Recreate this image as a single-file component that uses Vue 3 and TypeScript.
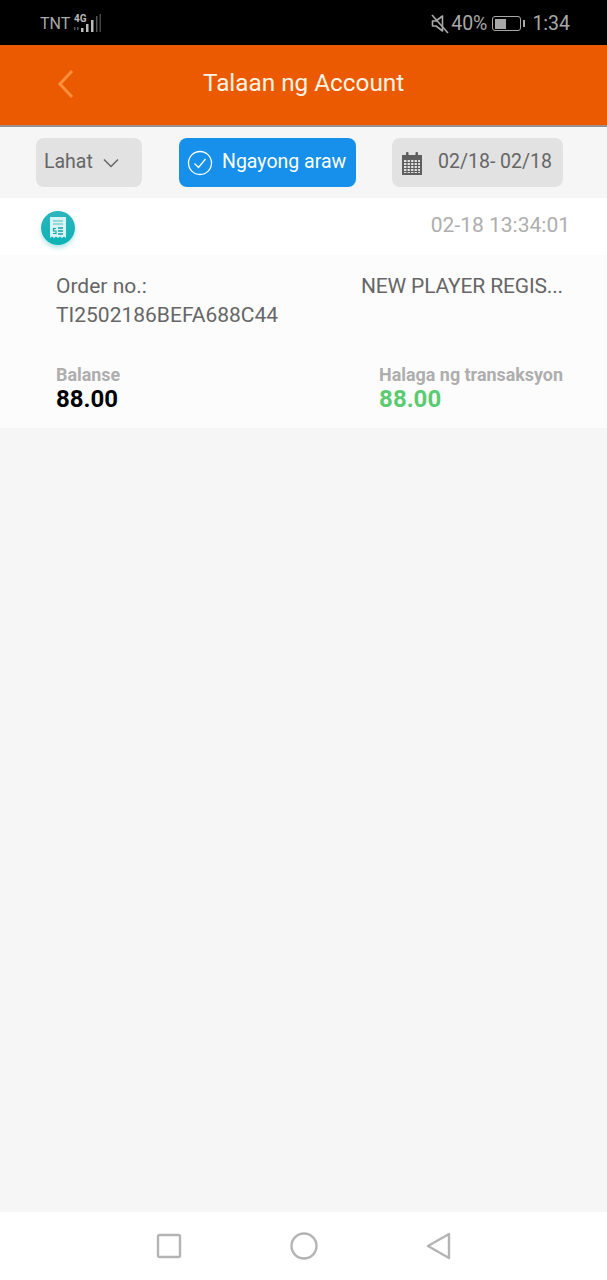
<script setup lang="ts">
const order = {
  label: 'Order no.:',
  no: 'TI2502186BEFA688C44',
  type: 'NEW PLAYER REGIS...',
  time: '02-18 13:34:01',
  balance: '88.00',
  amount: '88.00',
}
</script>

<template>
  <div class="page">
    <div class="status">
      <div class="status-left">
        <span>TNT</span>
        <svg class="signal" width="29" height="22" viewBox="0 0 29 22">
          <text x="1" y="9" class="net">4G</text>
          <rect x="1" y="14" width="1.5" height="3" fill="#555" />
          <rect x="4" y="14" width="1.5" height="3" fill="#555" />
          <rect x="8" y="15" width="2.500" height="4" fill="#bbb" />
          <rect x="13" y="11" width="2.500" height="8" fill="#bbb" />
          <rect x="18" y="7" width="2.500" height="12" fill="#bbb" />
          <rect x="23" y="3" width="1.5" height="16" fill="#555" />
          <rect x="26.500" y="1" width="1.5" height="18" fill="#444" />
        </svg>
      </div>
      <div class="status-right">
        <svg width="18" height="20" viewBox="0 0 18 20" fill="none" stroke="#aaa" stroke-width="1.600">
          <path d="M1.500 7h3.500L11.500 2v15l-6.500-5H1.500z" stroke-linejoin="round" />
          <path d="M1 1l16 18" />
        </svg>
        <span class="pct">40%</span>
        <div class="battery"><div class="battery-fill"></div></div>
        <div class="battery-tip"></div>
        <span class="clock">1:34</span>
      </div>
    </div>

    <header class="header">
      <svg class="back" width="18" height="30" viewBox="0 0 18 30" fill="none" stroke="#ff8f3c" stroke-width="3">
        <path d="M15 2L3 15l12 13" />
      </svg>
      <h1 class="title">Talaan ng Account</h1>
    </header>

    <div class="filters">
      <div class="chip chip-all">
        <span class="chip-text">Lahat</span>
        <svg width="18" height="10" viewBox="0 0 18 10" fill="none" stroke="#666" stroke-width="1.500">
          <path d="M2 1.500l7 7 7-7" />
        </svg>
      </div>
      <div class="chip chip-today">
        <svg width="26" height="26" viewBox="0 0 26 26" fill="none" stroke="#fff" stroke-width="1.300">
          <circle cx="13" cy="13" r="11.500" />
          <path d="M7.500 13.500l4 4 7-8.500" />
        </svg>
        <span class="chip-text">Ngayong araw</span>
      </div>
      <div class="chip chip-date">
        <svg width="22" height="26" viewBox="0 0 22 26">
          <path d="M1 5h20v20H1z" fill="#5f5f5f" />
          <rect x="5" y="2" width="2.500" height="6" rx="1" fill="#5f5f5f" />
          <rect x="14.500" y="2" width="2.500" height="6" rx="1" fill="#5f5f5f" />
          <rect x="3" y="10" width="16" height="13" fill="#e2e2e2" />
          <path d="M3 12.500h16M3 15.500h16M3 18.500h16M3 21.500h16" stroke="#5f5f5f" stroke-width="1.200" />
          <path d="M6 10v13M9.500 10v13M13 10v13M16.500 10v13" stroke="#5f5f5f" stroke-width="1.200" />
        </svg>
        <span class="chip-text">02/18- 02/18</span>
      </div>
    </div>

    <section class="card">
      <div class="card-top">
        <div class="receipt">
          <svg width="18" height="24" viewBox="0 0 18 24">
            <path d="M1 1h16v21l-2-1.500-2 1.500-2-1.500-2 1.500-2-1.500-2 1.500-2-1.500-2 1.500z" fill="#d8f3f3" />
            <path d="M4 5h10M4 8h10" stroke="#7fcfd2" stroke-width="1.500" />
            <path d="M9 12h5M9 15h5M9 18h5" stroke="#14a3ab" stroke-width="1.300" />
            <path d="M7 12.500H4.500v2.500H7v2.500H4" fill="none" stroke="#14a3ab" stroke-width="1.200" />
          </svg>
        </div>
        <span class="time">{{ order.time }}</span>
      </div>
      <div class="card-body">
        <div class="order-row">
          <div class="order-no">
            <div>{{ order.label }}</div>
            <div>{{ order.no }}</div>
          </div>
          <div class="order-type">{{ order.type }}</div>
        </div>
        <div class="money-row">
          <div>
            <div class="money-label">Balanse</div>
            <div class="money-value">{{ order.balance }}</div>
          </div>
          <div>
            <div class="money-label">Halaga ng transaksyon</div>
            <div class="money-value green">{{ order.amount }}</div>
          </div>
        </div>
      </div>
    </section>

    <div class="spacer"></div>

    <nav class="navbar">
      <svg width="26" height="26" viewBox="0 0 26 26" fill="none" stroke="#b4b4b4" stroke-width="2.400">
        <rect x="2" y="2" width="22" height="22" rx="1.500" />
      </svg>
      <svg width="28" height="28" viewBox="0 0 28 28" fill="none" stroke="#b4b4b4" stroke-width="2.400">
        <circle cx="14" cy="14" r="12.500" />
      </svg>
      <svg width="26" height="28" viewBox="0 0 26 28" fill="none" stroke="#b4b4b4" stroke-width="2.400" stroke-linejoin="round">
        <path d="M23 2v24L2 14z" />
      </svg>
    </nav>
  </div>
</template>

<style scoped>
.page {
  width: 607px;
  height: 1280px;
  display: flex;
  flex-direction: column;
  background: #f6f6f6;
  font-family: Roboto, "Liberation Sans", sans-serif;
  overflow: hidden;
}

.status {
  height: 45px;
  flex: none;
  background: #000;
  color: #a8a8a8;
  display: flex;
  justify-content: space-between;
  align-items: center;
  padding: 2px 37px 0 40px;
  box-sizing: border-box;
}

.status-left {
  display: flex;
  align-items: center;
  gap: 3px;
  font-size: 16px;
}

.net {
  font-size: 10px;
  font-weight: 700;
  fill: #bbb;
}

.status-right {
  display: flex;
  align-items: center;
  font-size: 19.500px;
}

.pct {
  margin-left: 2px;
}

.battery {
  width: 29px;
  height: 15px;
  margin-left: 5px;
  border: 1.500px solid #a8a8a8;
  border-radius: 3px;
  box-sizing: border-box;
  padding: 1.500px;
}

.battery-fill {
  width: 11px;
  height: 100%;
  background: #a8a8a8;
}

.battery-tip {
  width: 2px;
  height: 7px;
  margin-left: 2px;
  background: #a8a8a8;
}

.clock {
  margin-left: 7px;
}

.header {
  height: 82px;
  flex: none;
  background: #eb5a00;
  border-bottom: 2px solid #9a8f90;
  box-sizing: border-box;
  display: flex;
  align-items: center;
  padding: 0 0 2px 57px;
}

.back {
  flex: none;
}

.title {
  margin: 0 0 4px 128px;
  color: #fff3e6;
  font-size: 24.300px;
  font-weight: 400;
}

.filters {
  height: 71px;
  flex: none;
  box-sizing: border-box;
  display: flex;
  align-items: center;
  padding-left: 36px;
}

.chip {
  height: 49px;
  border-radius: 8px;
  box-sizing: border-box;
  display: flex;
  align-items: center;
  font-size: 19.500px;
  background: #e2e2e2;
  color: #666;
}

.chip-text {
  margin-bottom: 2px;
}

.chip-all {
  width: 106px;
  padding-left: 8px;
  gap: 9px;
}

.chip-today {
  width: 177px;
  margin-left: 37px;
  padding-left: 8px;
  gap: 9px;
  background: #1690ea;
  color: #fff;
}

.chip-date {
  width: 171px;
  margin-left: 36px;
  padding-left: 9px;
  gap: 15px;
}

.card {
  background: #fff;
  flex: none;
}

.card-top {
  height: 57px;
  display: flex;
  justify-content: space-between;
  align-items: center;
  padding: 0 37px 0 41px;
}

.receipt {
  width: 34px;
  height: 34px;
  margin-top: 2px;
  border-radius: 50%;
  background: linear-gradient(#2cb5bd, #0cb3b5);
  box-shadow: 0 3px 4px rgba(20, 170, 175, 0.3);
  display: flex;
  align-items: center;
  justify-content: center;
}

.time {
  color: #aeaeae;
  font-size: 21px;
  margin-top: -3px;
}

.card-body {
  height: 173px;
  box-sizing: border-box;
  background: #fcfcfc;
  padding: 17px 44px 0 56px;
}

.order-row {
  height: 93px;
  display: flex;
  justify-content: space-between;
  color: #666;
  font-size: 21px;
  line-height: 29px;
}

.order-type {
  white-space: nowrap;
  letter-spacing: -0.15px;
}

.money-row {
  display: flex;
  justify-content: space-between;
}

.money-label {
  color: #aeaeae;
  font-size: 17.900px;
  font-weight: 700;
  line-height: 20px;
}

.money-value {
  color: #000;
  font-size: 24px;
  font-weight: 700;
  line-height: 28px;
}

.green {
  color: #5bcb71;
}

.spacer {
  flex: 1;
}

.navbar {
  height: 68px;
  flex: none;
  background: #fff;
  display: flex;
  align-items: center;
  padding-left: 156px;
  gap: 108px;
}
</style>
